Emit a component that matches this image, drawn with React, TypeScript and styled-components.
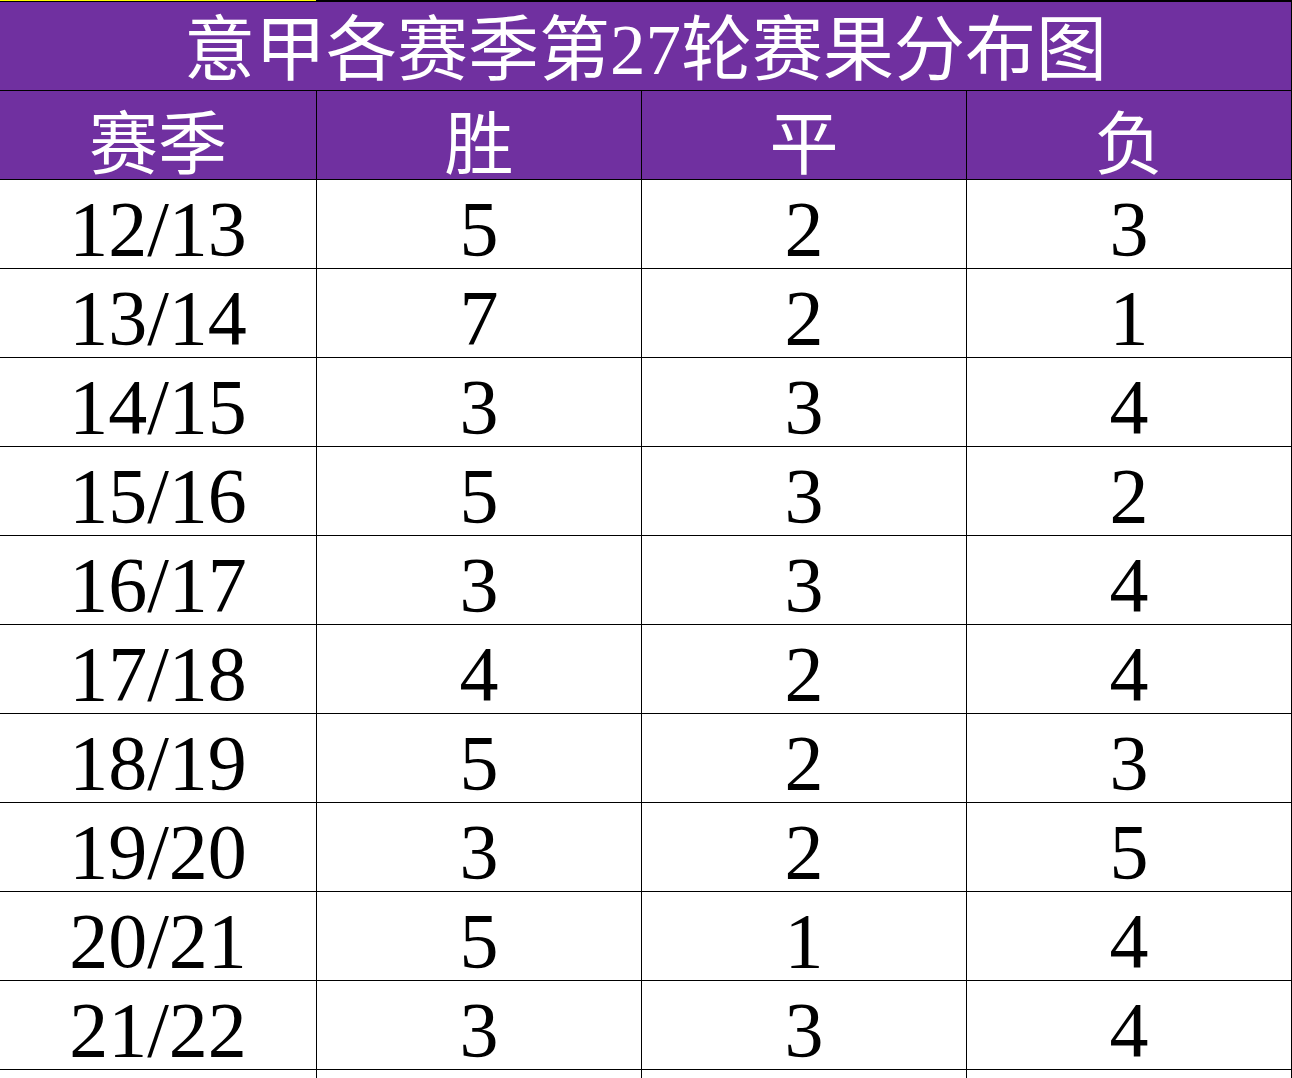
import styled, { createGlobalStyle } from 'styled-components'

const rows: [string, number, number, number][] = [
  ['12/13', 5, 2, 3],
  ['13/14', 7, 2, 1],
  ['14/15', 3, 3, 4],
  ['15/16', 5, 3, 2],
  ['16/17', 3, 3, 4],
  ['17/18', 4, 2, 4],
  ['18/19', 5, 2, 3],
  ['19/20', 3, 2, 5],
  ['20/21', 5, 1, 4],
  ['21/22', 3, 3, 4],
]

const GlobalStyle = createGlobalStyle`
  html, body {
    margin: 0;
    padding: 0;
    background: #ffffff;
    overflow: hidden;
  }
`

export default function App() {
  return (
    <>
      <GlobalStyle />
      <Page>
        <TopStrip />
        <Sheet>
          <Title>意甲各赛季第27轮赛果分布图</Title>
          <HeadCell>赛季</HeadCell>
          <HeadCell>胜</HeadCell>
          <HeadCell>平</HeadCell>
          <HeadCell>负</HeadCell>
          {rows.map(([season, w, d, l]) => (
            <Row key={season}>
              <Cell>{season}</Cell>
              <Cell>{w}</Cell>
              <Cell>{d}</Cell>
              <Cell>{l}</Cell>
            </Row>
          ))}
          {/* next row is cut off by the bottom edge, only its grid lines show */}
          <Cell />
          <Cell />
          <Cell />
          <Cell />
        </Sheet>
      </Page>
    </>
  )
}

const Page = styled.div`
  width: 1292px;
  height: 1078px;
  overflow: hidden;
`

const TopStrip = styled.div`
  height: 1px;
  background: linear-gradient(to right, #ffff00 0, #ffff00 316px, #000000 316px);
`

const Sheet = styled.div`
  display: grid;
  grid-template-columns: 316px 324px 324px 324px;
  grid-auto-rows: 88px;
  gap: 1px;
  padding: 1px 1px 0 0;
  background: #000000;
  width: 1292px;
  box-sizing: border-box;
`

const Title = styled.div`
  grid-column: 1 / -1;
  display: flex;
  align-items: center;
  justify-content: center;
  padding-top: 9px;
  box-sizing: border-box;
  background: #7030a0;
  color: #ffffff;
  font-family: 'Liberation Serif', 'Noto Sans CJK SC', serif;
  font-size: 71px;
  line-height: 1;
`

const HeadCell = styled.div`
  display: flex;
  align-items: center;
  justify-content: center;
  padding-top: 8px;
  box-sizing: border-box;
  background: #7030a0;
  color: #ffffff;
  font-family: 'Noto Sans CJK SC', sans-serif;
  font-size: 69px;
  line-height: 1;
`

const Row = styled.div`
  display: contents;
`

const Cell = styled.div`
  display: flex;
  align-items: center;
  justify-content: center;
  padding-top: 10px;
  box-sizing: border-box;
  background: #ffffff;
  color: #000000;
  font-family: 'Liberation Serif', serif;
  font-size: 78px;
  line-height: 1;
`
